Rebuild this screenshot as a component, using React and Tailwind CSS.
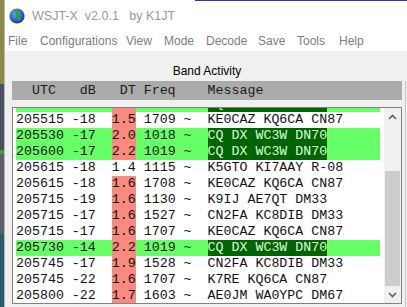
const rows = [
  { t: '205500', db: '-17', dt: '2.1', f: '1019', msg: 'CQ DX WC3W DN70', green: true, pink: true, cq: true },
  { t: '205515', db: '-18', dt: '1.5', f: '1709', msg: 'KE0CAZ KQ6CA CN87', pink: true },
  { t: '205530', db: '-17', dt: '2.0', f: '1018', msg: 'CQ DX WC3W DN70', green: true, pink: true, cq: true },
  { t: '205600', db: '-17', dt: '2.2', f: '1019', msg: 'CQ DX WC3W DN70', green: true, pink: true, cq: true },
  { t: '205615', db: '-18', dt: '1.4', f: '1115', msg: 'K5GTO KI7AAY R-08' },
  { t: '205615', db: '-18', dt: '1.6', f: '1708', msg: 'KE0CAZ KQ6CA CN87', pink: true },
  { t: '205715', db: '-19', dt: '1.6', f: '1130', msg: 'K9IJ AE7QT DM33', pink: true },
  { t: '205715', db: '-17', dt: '1.6', f: '1527', msg: 'CN2FA KC8DIB DM33', pink: true },
  { t: '205715', db: '-17', dt: '1.6', f: '1707', msg: 'KE0CAZ KQ6CA CN87', pink: true },
  { t: '205730', db: '-14', dt: '2.2', f: '1019', msg: 'CQ DX WC3W DN70', green: true, pink: true, cq: true },
  { t: '205745', db: '-17', dt: '1.9', f: '1528', msg: 'CN2FA KC8DIB DM33', pink: true },
  { t: '205745', db: '-22', dt: '1.6', f: '1707', msg: 'K7RE KQ6CA CN87', pink: true },
  { t: '205800', db: '-22', dt: '1.7', f: '1603', msg: 'AE0JM WA0YPC DM67', pink: true },
];

const menus = [
  { label: 'File', w: 'w-[32px]' },
  { label: 'Configurations', w: 'w-[86px]' },
  { label: 'View', w: 'w-[38px]' },
  { label: 'Mode', w: 'w-[42px]' },
  { label: 'Decode', w: 'w-[52px]' },
  { label: 'Save', w: 'w-[39px]' },
  { label: 'Tools', w: 'w-[42px]' },
  { label: 'Help', w: 'w-[40px]' },
];

function Globe() {
  return (
    <svg width="16" height="16" viewBox="0 0 16 16">
      <defs>
        <radialGradient id="g" cx="0.4" cy="0.35" r="0.7">
          <stop offset="0" stopColor="#6aa8ff" />
          <stop offset="1" stopColor="#1530a8" />
        </radialGradient>
      </defs>
      <circle cx="8" cy="8" r="7.6" fill="url(#g)" />
      <path d="M6 2.5 C8 2 10 3 10.5 4.5 C11 6 9.5 6.5 10 8 C10.5 9.5 12 9.5 11.5 11.5 C11 13 9.5 13 9 11.5 C8.5 10 7 10 6.5 8.5 C6 7 7.5 6 6.5 5 C5.5 4 5 3 6 2.5 Z" fill="#2fa33a" />
      <path d="M3 6 C4 5.5 4.5 7 4 8 C3.5 9 2.5 8.5 2.5 7.5 Z" fill="#2fa33a" />
    </svg>
  );
}

function Row({ r }) {
  return (
    <div className={`flex h-4 shrink-0 items-center whitespace-pre leading-4 ${r.green ? 'bg-[#66ff66]' : ''}`}>
      <span>{`${r.t} ${r.db}  `}</span>
      <span className={r.pink ? 'bg-[#f98a7e]' : ''}>{r.dt}</span>
      <span>{` ${r.f} ~  `}</span>
      <span className={r.cq ? 'bg-[#006400] text-[#dcffdc]' : ''}>{r.msg}</span>
    </div>
  );
}

export default function App() {
  return (
    <div className="relative flex h-[307px] w-[407px] overflow-hidden bg-[#f0f0f0] font-['Liberation_Sans',sans-serif]">
      <div className="flex w-[4px] shrink-0 flex-col">
        <div className="h-[84px] bg-[#8c8a48]" />
        <div className="h-[66px] bg-[#4a5262]" />
        <div className="h-[4px] bg-[#3fa040]" />
        <div className="h-[80px] bg-[#59606a]" />
        <div className="flex-1 bg-[#2c5a68]" />
      </div>
      <div className="flex min-w-0 flex-1 flex-col border-l border-[#b8b8b8]">
        <div className="h-px bg-white">
          <div className="ml-[190px] h-px bg-[#2b3a9c]" />
        </div>
        <div className="flex h-[30px] shrink-0 items-center gap-[7px] bg-white pl-[4px]">
          <Globe />
          <span className="whitespace-pre text-[12.5px] text-[#999999]">{'WSJT-X  v2.0.1   by K1JT'}</span>
        </div>
        <div className="flex h-[20px] shrink-0 items-center bg-white pl-[3px] text-[12px] text-[#7d7d7d]">
          {menus.map((m) => (
            <span key={m.label} className={`${m.w} shrink-0`}>{m.label}</span>
          ))}
        </div>
        <div className="flex min-h-0 flex-1">
          <div className="flex min-w-0 flex-1 flex-col pl-[7px] pt-[10px] pb-[3px]">
            <div className="h-[20px] shrink-0 text-center text-[12px] leading-[20px] text-black">Band Activity</div>
            <div className="flex h-[19px] shrink-0 items-center whitespace-pre bg-[#ababab] pl-[4px] font-['Liberation_Mono',monospace] text-[13.3px] text-[#1a1a1a]">
              {'  UTC   dB   DT Freq    Message'}
            </div>
            <div className="mt-[7px] flex min-h-0 flex-1 border border-[#828282] bg-white">
              <div className="flex min-w-0 flex-1 flex-col overflow-hidden pl-[3px] pr-[4px] font-['Liberation_Mono',monospace] text-[13.3px] text-[#111]">
                <div className="-mt-[12px] flex flex-col">
                  {rows.map((r, i) => (
                    <Row key={i} r={r} />
                  ))}
                </div>
              </div>
              <div className="flex w-[17px] shrink-0 flex-col bg-[#f0f0f0]">
                <div className="flex h-[17px] items-center justify-center">
                  <svg width="9" height="6" viewBox="0 0 9 6">
                    <path d="M1 5 L4.5 1.5 L8 5" fill="none" stroke="#606060" strokeWidth="1.6" />
                  </svg>
                </div>
                <div className="flex flex-1 flex-col px-[1px]">
                  <div className="h-[46px]" />
                  <div className="flex-1 bg-[#cdcdcd]" />
                </div>
                <div className="flex h-[17px] items-center justify-center">
                  <svg width="9" height="6" viewBox="0 0 9 6">
                    <path d="M1 1 L4.5 4.5 L8 1" fill="none" stroke="#606060" strokeWidth="1.6" />
                  </svg>
                </div>
              </div>
            </div>
          </div>
          <div className="ml-[3px] mr-[1px] mt-[30px] w-px bg-[#c4c4c4]" />
        </div>
      </div>
    </div>
  );
}
